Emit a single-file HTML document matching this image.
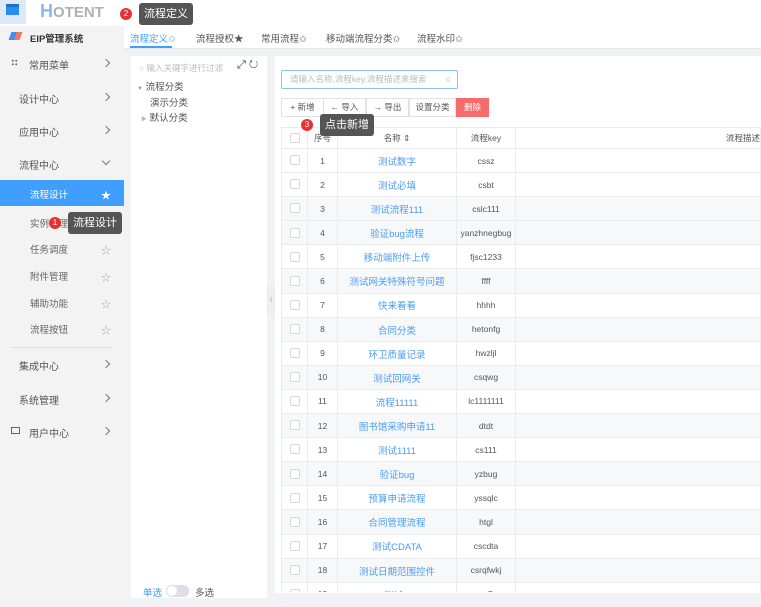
<!DOCTYPE html>
<html><head><meta charset="utf-8"><style>
*{margin:0;padding:0;box-sizing:border-box}
body{width:761px;height:606px;overflow:hidden;background:#f0f2f5;font-family:"Liberation Sans","Noto Sans CJK SC",sans-serif;font-size:10px;color:#555;position:relative}
.a{position:absolute}
.top{left:0;top:0;width:761px;height:26px;background:#fff}
.side{left:0;top:26px;width:124px;height:580px;background:#f3f3f3}
.mi{position:absolute;left:19px;font-size:10px;color:#555}
.chev{position:absolute;left:103px;width:6px;height:6px;border-right:1.3px solid #777;border-top:1.3px solid #777;transform:rotate(45deg)}
.sub{position:absolute;left:30px;color:#666;font-size:9.5px}
.star{position:absolute;left:101px;color:#aaa;font-size:10px}
.tab{position:absolute;top:31px;font-size:9.5px;color:#555}
table{border-collapse:collapse;position:absolute;left:281px;top:127px;width:480px;font-size:8.5px;table-layout:fixed}
tr{height:24.1px}
td{padding:0;border:1px solid #ececec;text-align:center;color:#555;line-height:12px;vertical-align:middle}
td a{color:#4a9cf5;font-size:9.5px;display:inline-block;vertical-align:middle;line-height:12px;position:relative;top:2px}
tr.g td{background:#f7f8fa}
.cb{display:inline-block;width:10px;height:10px;border:1px solid #d8d8d8;background:#fff;border-radius:2px;vertical-align:middle;position:relative;top:-1px}
.btn{position:absolute;top:98px;height:19px;border:1px solid #e2e2e2;background:#fff;font-size:8.5px;color:#555;text-align:center;line-height:17px}
.tip{background:#555;color:#fff;border-radius:3px;font-size:11px;padding:0 5px;line-height:22px;height:22px}
.badge{width:12px;height:12px;border-radius:6px;background:#e8322f;color:#fff;font-size:8px;text-align:center;line-height:12px}
</style></head><body>
<div class="a top"></div>
<div class="a" style="left:0;top:0;width:26px;height:24px;background:#dde9f7"></div>
<div class="a" style="left:6px;top:4px;width:13px;height:11px;background:#2d8cf0;border-top:3px solid #1a6fd0"></div>
<div class="a" style="left:40px;top:1px;font-size:18px;font-weight:bold;color:#8fb6e8;line-height:20px">H<span style="font-size:15px;color:#b0b0b0">OTENT</span></div>
<div class="a badge" style="left:120px;top:8px">2</div>
<div class="a tip" style="left:139px;top:3px">流程定义</div>

<div class="a side"></div>
<div class="a" style="left:10px;top:32px;width:11px;height:8px;background:linear-gradient(90deg,#3b8ff0 50%,#f07a5a 50%);transform:skewX(-20deg)"></div>
<div class="a" style="left:30px;top:31px;font-size:9.5px;font-weight:bold;color:#333">EIP管理系统</div>
<div class="a" style="left:11px;top:59px;width:7px;height:7px;background:radial-gradient(circle,#666 40%,transparent 41%) 0 0/3.5px 3.5px"></div>
<div class="mi" style="left:29px;top:57px">常用菜单</div><div class="chev" style="top:60px"></div>
<div class="mi" style="top:91px">设计中心</div><div class="chev" style="top:94px"></div>
<div class="mi" style="top:124px">应用中心</div><div class="chev" style="top:127px"></div>
<div class="mi" style="top:157px">流程中心</div><div class="chev" style="top:158px;transform:rotate(135deg)"></div>
<div class="a" style="left:0;top:180px;width:124px;height:26px;background:#409eff"></div>
<div class="sub" style="top:187px;color:#fff">流程设计</div><div class="star" style="top:187px;color:#fff">★</div>
<div class="sub" style="top:216px">实例管理</div>
<div class="a badge" style="left:49px;top:217px">1</div>
<div class="a tip" style="left:68px;top:212px;font-size:11px">流程设计</div>
<div class="sub" style="top:242px">任务调度</div><div class="star" style="top:242px">☆</div>
<div class="sub" style="top:269px">附件管理</div><div class="star" style="top:269px">☆</div>
<div class="sub" style="top:296px">辅助功能</div><div class="star" style="top:296px">☆</div>
<div class="sub" style="top:322px">流程按钮</div><div class="star" style="top:322px">☆</div>
<div class="a" style="left:11px;top:347px;width:101px;height:1px;background:#e0e0e0"></div>
<div class="mi" style="top:358px">集成中心</div><div class="chev" style="top:361px"></div>
<div class="mi" style="top:392px">系统管理</div><div class="chev" style="top:395px"></div>
<div class="a" style="left:11px;top:427px;width:9px;height:7px;border:1.2px solid #666"></div>
<div class="mi" style="left:29px;top:425px">用户中心</div><div class="chev" style="top:428px"></div>

<div class="a" style="left:124px;top:26px;width:637px;height:23px;background:#fff;border-bottom:1px solid #e8e8e8"></div>
<div class="tab" style="left:130px;color:#409eff">流程定义✩</div>
<div class="a" style="left:130px;top:46px;width:42px;height:2px;background:#409eff"></div>
<div class="tab" style="left:196px">流程授权★</div>
<div class="tab" style="left:261px">常用流程✩</div>
<div class="tab" style="left:326px">移动端流程分类✩</div>
<div class="tab" style="left:417px">流程水印✩</div>

<div class="a" style="left:131px;top:56px;width:136px;height:542px;background:#fff"></div>
<div class="a" style="left:139px;top:62px;font-size:8.5px;color:#bbb">○ 输入关键字进行过滤</div>
<div class="a" style="left:237px;top:59px;font-size:11px;color:#333">⤢ ↻</div>
<div class="a" style="left:137px;top:79px;font-size:9.5px;color:#555"><span style="font-size:6px;color:#999">▼</span> 流程分类</div>
<div class="a" style="left:150px;top:95px;font-size:9.5px;color:#555">演示分类</div>
<div class="a" style="left:141px;top:110px;font-size:9.5px;color:#555"><span style="font-size:6px;color:#bbb">▶</span> 默认分类</div>
<div class="a" style="left:143px;top:585px;font-size:9.5px;color:#409eff">单选</div>
<div class="a" style="left:166px;top:585px;width:23px;height:12px;border-radius:6px;background:#dcdfe6"><div style="margin:1px;width:10px;height:10px;border-radius:5px;background:#fff"></div></div>
<div class="a" style="left:195px;top:585px;font-size:9.5px;color:#555">多选</div>
<div class="a" style="left:267px;top:286px;width:8px;height:28px;background:#eee;color:#aaa;font-size:10px;line-height:28px;text-align:center">‹</div>

<div class="a" style="left:275px;top:56px;width:486px;height:537px;background:#fff"></div>
<div class="a" style="left:281px;top:70px;width:177px;height:19px;border:1px solid #8cc0f5;border-radius:2px;font-size:8.5px;color:#bbb;line-height:17px;padding-left:8px">请输入名称,流程key,流程描述来搜索<span style="position:absolute;right:6px;color:#999">○</span></div>
<div class="btn" style="left:281px;width:43px">+ 新增</div>
<div class="btn" style="left:323px;width:43px">← 导入</div>
<div class="btn" style="left:366px;width:43px">→ 导出</div>
<div class="btn" style="left:409px;width:47px">设置分类</div>
<div class="btn" style="left:456px;width:33px;background:#f56c6c;border-color:#f56c6c;color:#fff">删除</div>

<table>
<colgroup><col style="width:26px"><col style="width:30px"><col style="width:119px"><col style="width:59px"><col></colgroup>
<tr style="height:21px"><td><span class="cb"></span></td><td>序号</td><td>名称 ⇕</td><td>流程key</td><td style="text-align:right">流程描述</td></tr>
<tr><td><span class="cb"></span></td><td>1</td><td><a>测试数字</a></td><td>cssz</td><td></td></tr>
<tr><td><span class="cb"></span></td><td>2</td><td><a>测试必填</a></td><td>csbt</td><td></td></tr>
<tr class="g"><td><span class="cb"></span></td><td>3</td><td><a>测试流程111</a></td><td>cslc111</td><td></td></tr>
<tr class="g"><td><span class="cb"></span></td><td>4</td><td><a>验证bug流程</a></td><td>yanzhnegbug</td><td></td></tr>
<tr><td><span class="cb"></span></td><td>5</td><td><a>移动端附件上传</a></td><td>fjsc1233</td><td></td></tr>
<tr class="g"><td><span class="cb"></span></td><td>6</td><td><a>测试网关特殊符号问题</a></td><td>ffff</td><td></td></tr>
<tr><td><span class="cb"></span></td><td>7</td><td><a>快来看看</a></td><td>hhhh</td><td></td></tr>
<tr class="g"><td><span class="cb"></span></td><td>8</td><td><a>合同分类</a></td><td>hetonfg</td><td></td></tr>
<tr><td><span class="cb"></span></td><td>9</td><td><a>环卫质量记录</a></td><td>hwzljl</td><td></td></tr>
<tr class="g"><td><span class="cb"></span></td><td>10</td><td><a>测试回网关</a></td><td>csqwg</td><td></td></tr>
<tr><td><span class="cb"></span></td><td>11</td><td><a>流程11111</a></td><td>lc1111111</td><td></td></tr>
<tr class="g"><td><span class="cb"></span></td><td>12</td><td><a>图书馆采购申请11</a></td><td>dtdt</td><td></td></tr>
<tr><td><span class="cb"></span></td><td>13</td><td><a>测试1111</a></td><td>cs111</td><td></td></tr>
<tr class="g"><td><span class="cb"></span></td><td>14</td><td><a>验证bug</a></td><td>yzbug</td><td></td></tr>
<tr><td><span class="cb"></span></td><td>15</td><td><a>预算申请流程</a></td><td>yssqlc</td><td></td></tr>
<tr class="g"><td><span class="cb"></span></td><td>16</td><td><a>合同管理流程</a></td><td>htgl</td><td></td></tr>
<tr><td><span class="cb"></span></td><td>17</td><td><a>测试CDATA</a></td><td>cscdta</td><td></td></tr>
<tr class="g"><td><span class="cb"></span></td><td>18</td><td><a>测试日期范围控件</a></td><td>csrqfwkj</td><td></td></tr>
<tr><td><span class="cb"></span></td><td>19</td><td><a>测试C</a></td><td>csC</td><td></td></tr>
</table>
<div class="a" style="left:275px;top:592px;width:486px;height:14px;background:#f0f2f5"></div>
<div class="a" style="left:275px;top:592px;width:486px;height:1px;background:#fff"></div>
<div class="a badge" style="left:301px;top:119px">3</div>
<div class="a tip" style="left:320px;top:114px">点击新增</div>
</body></html>
